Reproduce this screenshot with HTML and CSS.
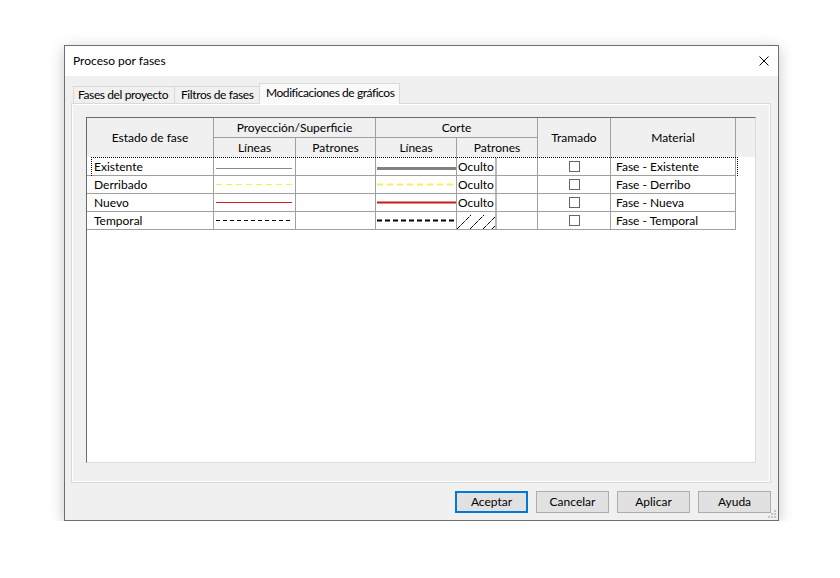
FILE: index.html
```html
<!DOCTYPE html>
<html lang="es">
<head>
<meta charset="utf-8">
<title>Proceso por fases</title>
<link rel="stylesheet" href="styles.css">
</head>
<body>
<div class="dialog">
  <div class="titlebar">
    <span class="title">Proceso por fases</span>
    <svg class="close" width="10" height="10" viewBox="0 0 10 10"><path d="M0.5 0.5 L9.5 9.5 M9.5 0.5 L0.5 9.5" stroke="#000" stroke-width="1" fill="none"/></svg>
  </div>
  <div class="body">
    <div class="tabs">
      <div class="tab t1">Fases del proyecto</div>
      <div class="tab t2">Filtros de fases</div>
      <div class="tab active">Modificaciones de gráficos</div>
    </div>
    <div class="panel">
      <div class="grid">
        <div class="head">
          <div class="hc h-estado">Estado de fase</div>
          <div class="hc h-proy">Proyección/Superficie</div>
          <div class="hc h-corte">Corte</div>
          <div class="hc h-tram">Tramado</div>
          <div class="hc h-mat">Material</div>
          <div class="hc h-extra"></div>
          <div class="hc h-l1">Líneas</div>
          <div class="hc h-p1">Patrones</div>
          <div class="hc h-l2">Líneas</div>
          <div class="hc h-p2">Patrones</div>
        </div>

        <div class="row focus">
          <div class="c name">Existente</div>
          <div class="c"><svg width="81" height="17"><line x1="2" y1="9.5" x2="78" y2="9.5" stroke="#8a8a8a" stroke-width="1"/></svg></div>
          <div class="c"></div>
          <div class="c"><svg width="80" height="17"><line x1="1" y1="9.5" x2="80" y2="9.5" stroke="#808080" stroke-width="3"/></svg></div>
          <div class="c pc"><span class="pat">Oculto</span><span class="sep"></span></div>
          <div class="c chk"><span class="box"></span></div>
          <div class="c mat">Fase - Existente</div>
        </div>

        <div class="row">
          <div class="c name">Derribado</div>
          <div class="c"><svg width="81" height="17"><line x1="2" y1="8.5" x2="81" y2="8.5" stroke="#f2f04a" stroke-width="1" stroke-dasharray="6 4"/></svg></div>
          <div class="c"></div>
          <div class="c"><svg width="80" height="17"><line x1="1" y1="8.5" x2="80" y2="8.5" stroke="#f4f25a" stroke-width="2" stroke-dasharray="6 4"/></svg></div>
          <div class="c pc"><span class="pat">Oculto</span><span class="sep"></span></div>
          <div class="c chk"><span class="box"></span></div>
          <div class="c mat">Fase - Derribo</div>
        </div>

        <div class="row">
          <div class="c name">Nuevo</div>
          <div class="c"><svg width="81" height="17"><line x1="2" y1="8.5" x2="78" y2="8.5" stroke="#c81e1e" stroke-width="1"/></svg></div>
          <div class="c"></div>
          <div class="c"><svg width="80" height="17"><line x1="1" y1="8.5" x2="80" y2="8.5" stroke="#c41c1c" stroke-width="2"/></svg></div>
          <div class="c pc"><span class="pat">Oculto</span><span class="sep"></span></div>
          <div class="c chk"><span class="box"></span></div>
          <div class="c mat">Fase - Nueva</div>
        </div>

        <div class="row">
          <div class="c name">Temporal</div>
          <div class="c"><svg width="81" height="17"><line x1="2" y1="8.5" x2="78" y2="8.5" stroke="#000" stroke-width="1" stroke-dasharray="4 3"/></svg></div>
          <div class="c"></div>
          <div class="c"><svg width="80" height="17"><line x1="1" y1="8.5" x2="80" y2="8.5" stroke="#000" stroke-width="2" stroke-dasharray="5 3"/></svg></div>
          <div class="c pc"><span class="pat"><svg width="38" height="17"><path d="M0 17 L14 3 M13 17 L27 3 M26 17 L38 5 M35 17 L38 14" stroke="#000" stroke-width="1" fill="none" stroke-dasharray="5 1"/></svg></span><span class="sep"></span></div>
          <div class="c chk"><span class="box"></span></div>
          <div class="c mat">Fase - Temporal</div>
        </div>
      </div>
    </div>
    <div class="buttons">
      <button class="btn default">Aceptar</button>
      <button class="btn">Cancelar</button>
      <button class="btn">Aplicar</button>
      <button class="btn">Ayuda</button>
    </div>
  </div>
  <svg class="grip" width="9" height="9" viewBox="0 0 9 9">
    <rect x="6" y="0" width="2" height="2" fill="#c4c4c4"/>
    <rect x="3" y="3" width="2" height="2" fill="#c4c4c4"/>
    <rect x="6" y="3" width="2" height="2" fill="#c4c4c4"/>
    <rect x="0" y="6" width="2" height="2" fill="#c4c4c4"/>
    <rect x="3" y="6" width="2" height="2" fill="#c4c4c4"/>
    <rect x="6" y="6" width="2" height="2" fill="#c4c4c4"/>
  </svg>
</div>
</body>
</html>
```
FILE: styles.css
```css
* { box-sizing: border-box; }
html, body { margin: 0; padding: 0; background: #fff; }
body {
  font-family: Lato, "Noto Sans", "Liberation Sans", sans-serif;
  font-size: 12px;
  color: #000;
}
.dialog {
  position: relative;
  margin: 45px 0 0 64px;
  width: 715px;
  height: 476px;
  border: 1px solid #6f6f6f;
  background: #f0f0f0;
  box-shadow: 0 3px 14px rgba(0, 0, 0, 0.22);
  display: flex;
  flex-direction: column;
}
.titlebar {
  height: 30px;
  background: #fff;
  display: flex;
  align-items: center;
  justify-content: space-between;
  padding: 0 9px 0 8px;
}
.title { line-height: 16px; }
.close { display: block; }
.body {
  flex: 1;
  padding: 7px 7px 7px 6px;
  display: flex;
  flex-direction: column;
}
.tabs {
  display: flex;
  align-items: flex-end;
  height: 20px;
  margin-left: 2px;
}
.tab {
  height: 17px;
  border: 1px solid #d9d9d9;
  border-bottom: none;
  border-right: none;
  background: #f0f0f0;
  line-height: 16px;
  white-space: nowrap;
  letter-spacing: -0.4px;
}
.t1 { width: 101px; padding-left: 4px; }
.t2 { width: 85px; padding-left: 6px; }
.tab.active {
  position: relative;
  z-index: 1;
  width: 141px;
  height: 21px;
  margin-bottom: -1px;
  padding-left: 6px;
  border-right: 1px solid #d9d9d9;
  background: #f9f9f9;
  line-height: 18px;
  letter-spacing: -0.45px;
}
.panel {
  height: 380px;
  border: 1px solid #d9d9d9;
  background: #f0f0f0;
  box-shadow: inset 1px 1px 0 #fff, inset -1px -1px 0 #fff;
  padding: 13px 14px 19px 14px;
}
.grid {
  height: 346px;
  background: #fff;
  border-top: 1px solid #6a6a6a;
  border-left: 1px solid #6a6a6a;
  border-right: 1px solid #dcdcdc;
  border-bottom: 1px solid #dcdcdc;
}
.head {
  display: grid;
  grid-template-columns: 127px 82px 80px 81px 81px 73px 125px 19px;
  grid-template-rows: 20px 19px;
  background: #f0f0f0;
}
.hc {
  display: flex;
  align-items: center;
  justify-content: center;
  border-right: 1px solid #a0a0a0;
  line-height: 16px;
  white-space: nowrap;
}
.h-estado { grid-column: 1; grid-row: 1 / 3; }
.h-proy { grid-column: 2 / 4; grid-row: 1; border-bottom: 1px solid #a0a0a0; }
.h-corte { grid-column: 4 / 6; grid-row: 1; border-bottom: 1px solid #a0a0a0; }
.h-tram { grid-column: 6; grid-row: 1 / 3; }
.h-mat { grid-column: 7; grid-row: 1 / 3; }
.h-extra { grid-column: 8; grid-row: 1 / 3; border-right: none; }
.h-l1 { grid-column: 2; grid-row: 2; }
.h-p1 { grid-column: 3; grid-row: 2; }
.h-l2 { grid-column: 4; grid-row: 2; }
.h-p2 { grid-column: 5; grid-row: 2; }

.row {
  display: grid;
  grid-template-columns: 127px 82px 80px 81px 81px 73px 125px;
  height: 18px;
}
.row.focus { position: relative; height: 19px; }
.row.focus::after {
  content: "";
  position: absolute;
  left: 4px;
  top: 0;
  width: 645px;
  height: 18px;
  border: 1px dotted #000;
  border-bottom: none;
  pointer-events: none;
}
.c {
  border-right: 1px solid #a0a0a0;
  border-bottom: 1px solid #a0a0a0;
  display: flex;
  align-items: center;
  line-height: 16px;
  white-space: nowrap;
  overflow: hidden;
}
.focus .c { padding-top: 2px; }
.focus .c.pc, .focus .c.chk { padding-top: 1px; }
.c svg { display: block; }
.name { padding-left: 7px; }
.mat { padding-left: 5px; }
.pc { align-items: stretch; }
.pat {
  width: 38px;
  display: flex;
  align-items: center;
  padding-left: 1px;
  overflow: hidden;
}
.pat svg { margin-left: -1px; }
.sep { width: 2px; background: #b9b9b9; }
.chk { justify-content: center; }
.box {
  width: 11px;
  height: 11px;
  border: 1px solid #666;
  background: #fff;
}
.buttons {
  display: flex;
  justify-content: flex-end;
  gap: 8px;
  margin-top: 8px;
}
.btn {
  width: 73px;
  height: 22px;
  padding: 0;
  border: 1px solid #adadad;
  background: #e1e1e1;
  font-family: inherit;
  font-size: 12px;
  color: #000;
  line-height: 18px;
}
.btn.default {
  border-color: #0078d7;
  box-shadow: inset 0 0 0 1px #0078d7;
}
.grip {
  position: absolute;
  right: 1px;
  bottom: 1px;
}
```
